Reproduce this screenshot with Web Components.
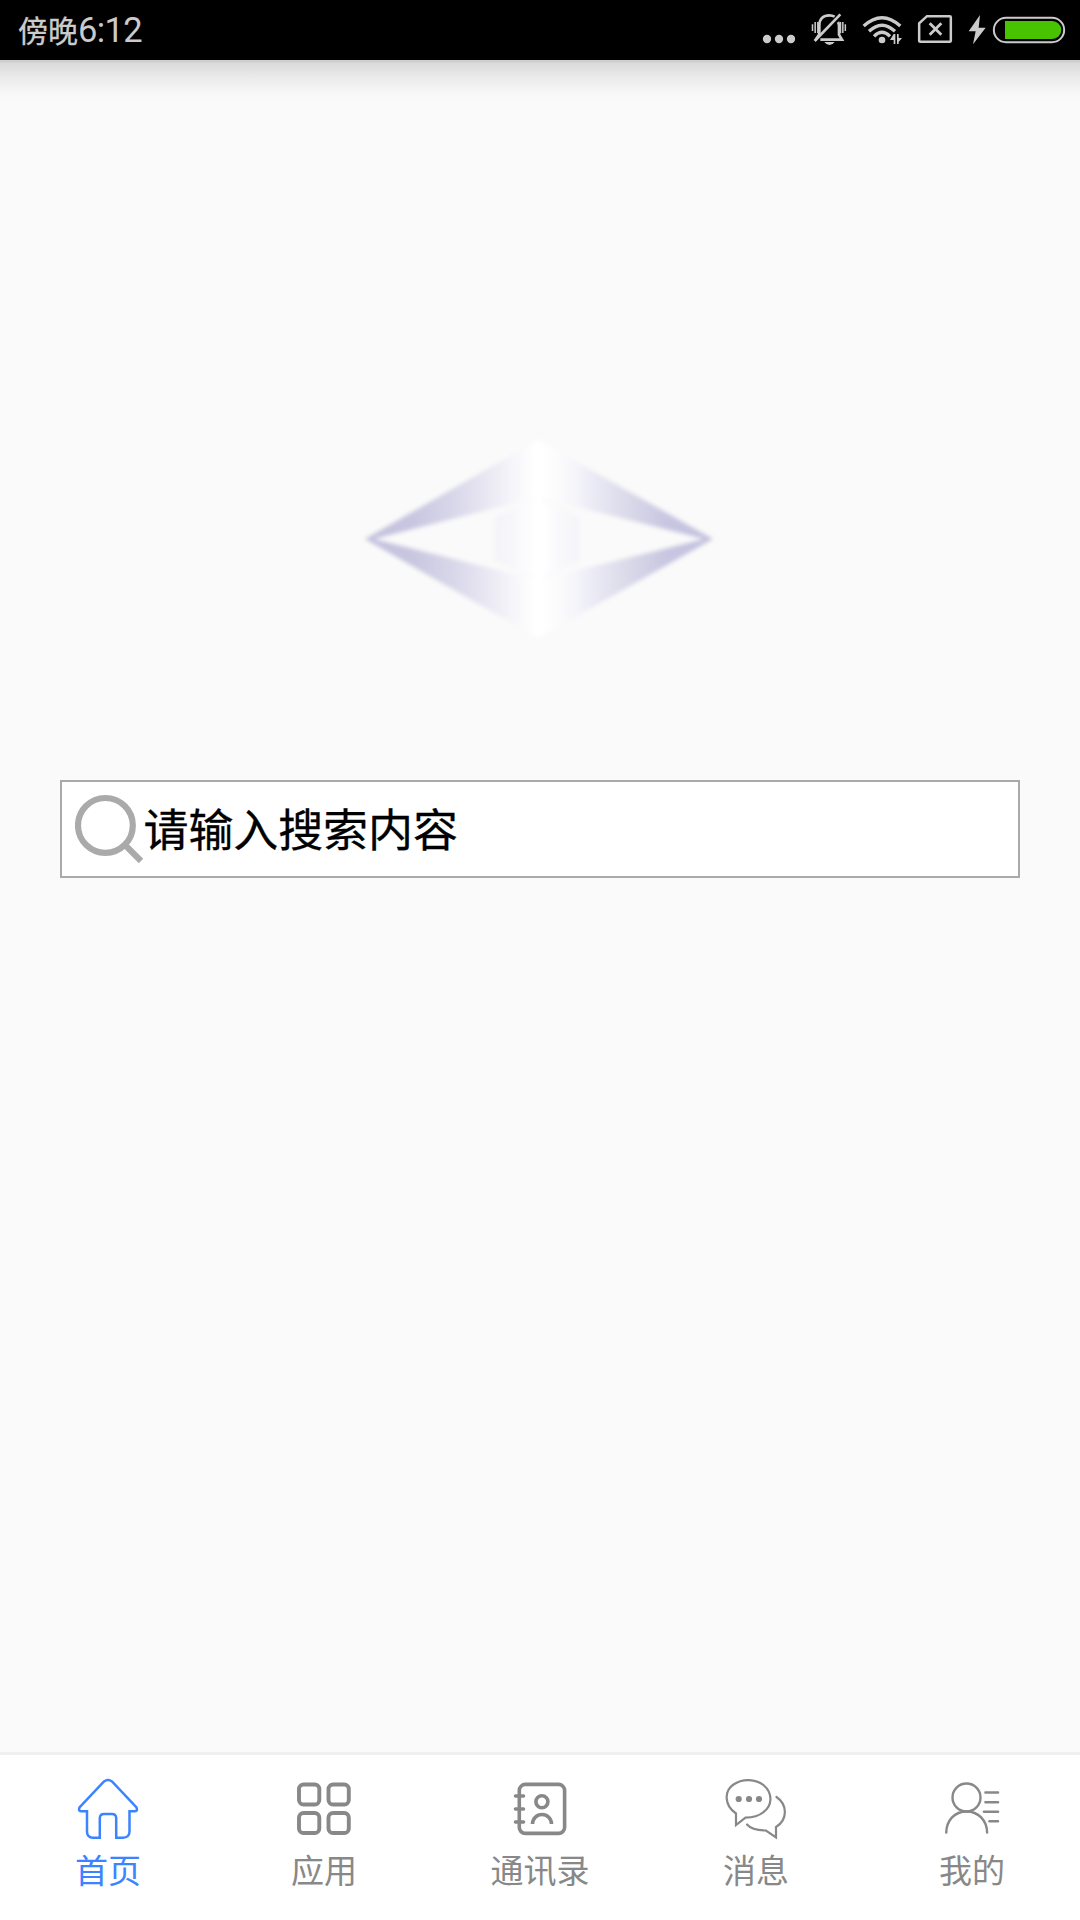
<!DOCTYPE html>
<html lang="zh-CN">
<head>
<meta charset="utf-8">
<title>首页</title>
<style>
html,body{margin:0;height:100%;background:#fafafa}
body{font-family:"Noto Sans CJK SC","Noto Sans",sans-serif}
</style>
</head>
<body>
<home-screen></home-screen>
<script>
// name: [viewBox, width, height, markup]
const ICONS = {
  dots: ['36 0 102 180', 34, 60, '<g fill="currentColor"><circle cx="51" cy="117" r="12.5"/><circle cx="87" cy="117" r="12.5"/><circle cx="123" cy="117" r="12.5"/></g>'],
  mute: ['183 0 108 180', 36, 60, '<g fill="none" stroke="currentColor" stroke-width="8"><path d="M208 106V76C208 56 221 46 238 46Q247 46 254 50M264 66Q267 71 267 78V104L276 119H211M207 104L196 121"/><path d="M194 123L271 43"/><path d="M187.500 73V93M195.500 66V99M203.500 66V100M271.500 66V100M278.500 66V99M286 73V93" stroke-width="4.500"/></g><path d="M223 126H254Q248 135 238.500 135T223 126Z" fill="currentColor"/>'],
  wifi: ['336 0 123 180', 41, 60, '<g fill="none" stroke="currentColor" stroke-width="10"><path d="M341 78Q396 28 451 78M357 94Q396 57 435 94M372 109Q396 85 420 109"/></g><circle cx="396" cy="120" r="10" fill="currentColor"/><path d="M431 102H436V132H431V120H420ZM441 102H446V114H456L446 126V132H441Z" fill="currentColor"/>'],
  sim: ['501 0 108 180', 36, 60, '<g fill="none" stroke="currentColor" stroke-width="7.500"><path d="M531 48.500H599Q602.500 48.500 602.500 52V122Q602.500 125.500 599 125.500H511Q507.500 125.500 507.500 122V70Z"/><path d="M539 70L574 104M574 70L539 104" stroke-width="8.500"/></g>'],
  bolt: ['654 0 54 180', 18, 60, '<path d="M690 45L656 94H677L669 133L707 83H686Z" fill="currentColor"/>'],
  battery: ['726 0 222 180', 74, 60, '<rect x="731.500" y="53.500" width="211" height="73" rx="36.500" fill="none" stroke="currentColor" stroke-width="6"/><path d="M765 63H907A27 27 0 0 1 907 117H765Z" fill="#47c300"/>'],
  search: ['75 794 70 70', 70, 70, '<g fill="none" stroke="#aaa" stroke-width="6.200"><circle cx="105.400" cy="825.400" r="27.400"/><path d="M125 845L141 861"/></g>'],
  home: ['75 1776 66 66', 66, 66, '<path d="M104 1781.500Q108 1778.500 112 1781.500L136.500 1807.500Q138 1811.500 134 1811.300H129.500V1832Q129 1837.500 123 1837.800H116.200V1818Q116 1814 112 1814H104Q100 1814 99.800 1818V1837.800H93Q87.300 1837.500 87 1832V1811.300H82Q78 1811.500 79.500 1807.500Z" fill="none" stroke="currentColor" stroke-width="2.500"/>'],
  apps: ['291 1776 66 66', 66, 66, '<g fill="none" stroke="currentColor" stroke-width="3.900"><rect x="299" y="1784.500" width="20.300" height="20" rx="4.500"/><rect x="328.500" y="1784.500" width="20.300" height="20" rx="4.500"/><rect x="299" y="1813" width="20.300" height="20" rx="4.500"/><rect x="328.500" y="1813" width="20.300" height="20" rx="4.500"/></g>'],
  contacts: ['507 1776 66 66', 66, 66, '<g fill="none" stroke="currentColor" stroke-width="3.600"><rect x="519.300" y="1784.400" width="45.300" height="49" rx="6"/><path d="M515.500 1796H523.500M515.500 1809H523.500M515.500 1822H523.500" stroke-linecap="round"/><circle cx="541.900" cy="1801.800" r="6"/><path d="M532.500 1824A9.500 9.500 0 0 1 551.500 1824"/></g>'],
  chat: ['723 1776 66 66', 66, 66, '<g fill="none" stroke="currentColor" stroke-width="2.200"><path d="M736 1813.500C724 1805.500 724 1791 733.500 1784.500C742 1778.300 756 1778.500 764 1785.500C773 1793.500 772.500 1806 763 1812.500Q757 1817.300 745.500 1817.700L736 1825Z"/><path d="M776.500 1797C788 1805 787.500 1820 776 1827V1837.500L766 1830.500C758 1830.500 751 1829 747 1824.500" stroke-linecap="round"/></g><g fill="currentColor"><circle cx="738.700" cy="1799" r="3.100"/><circle cx="749" cy="1799" r="3.100"/><circle cx="759" cy="1799" r="3.100"/></g>'],
  me: ['939 1776 66 66', 66, 66, '<g fill="none" stroke="currentColor" stroke-width="2.400"><circle cx="966.500" cy="1797.500" r="14"/><path d="M946.200 1833.500C946.200 1820 955 1811.500 966.500 1811.500S987.200 1820 987.200 1833.500"/><path d="M985.500 1792.500H998M985.500 1802.200H998M984 1811.700H998M989.500 1821.300H998" stroke-linecap="round" stroke-width="2.600"/></g>']
};

class UiIcon extends HTMLElement {
  connectedCallback() {
    const [box, w, h, body] = ICONS[this.getAttribute('name')];
    this.attachShadow({mode: 'open'}).innerHTML =
      `<style>:host{display:block;flex:none}svg{display:block}</style><svg viewBox="${box}" width="${w}" height="${h}">${body}</svg>`;
  }
}

class StatusBar extends HTMLElement {
  connectedCallback() {
    this.attachShadow({mode: 'open'}).innerHTML = `
      <style>
        :host{display:flex;align-items:center;justify-content:space-between;height:60px;background:#000;color:#cbcbcb;padding:0 14px 0 18px;box-sizing:border-box}
        .time{display:flex;align-items:center;font-size:30px;line-height:60px;height:60px;font-weight:400;-webkit-text-stroke:.3px currentColor}
        .time span{margin-top:-3px}
        .time .num{font-family:Roboto,"Noto Sans",sans-serif;font-size:34.500px;margin:0;letter-spacing:-.6px;-webkit-text-stroke:0}
        .icons{display:flex}
        .icons ui-icon+ui-icon{margin-left:15px}
        .icons ui-icon[name=sim]{margin-left:14px}
        .icons ui-icon[name=battery]{margin-left:6px}
      </style>
      <div class="time"><span>傍晚</span><span class="num">6:12</span></div>
      <div class="icons">${['dots','mute','wifi','sim','bolt','battery'].map(n => `<ui-icon name="${n}"></ui-icon>`).join('')}</div>`;
  }
}

class BrandMark extends HTMLElement {
  connectedCallback() {
    this.attachShadow({mode: 'open'}).innerHTML = `
      <style>:host{display:block}svg{display:block}</style>
      <svg viewBox="350 420 380 240" width="380" height="240">
        <defs>
          <linearGradient id="band" gradientUnits="userSpaceOnUse" x1="367" x2="711" y1="0" y2="0">
            <stop offset="0" stop-color="#c2c0de"/><stop offset=".13" stop-color="#c8c6e0"/>
            <stop offset=".25" stop-color="#d8d7e9"/><stop offset=".34" stop-color="#e8e6f2"/>
            <stop offset=".41" stop-color="#f4f3f9"/><stop offset=".455" stop-color="#fafafc"/>
            <stop offset=".485" stop-color="#fff"/><stop offset=".51" stop-color="#fff"/>
            <stop offset=".55" stop-color="#fcfcfd"/>
            <stop offset=".6" stop-color="#f6f6fb"/><stop offset=".68" stop-color="#e7e6f2"/>
            <stop offset=".78" stop-color="#d7d6e7"/><stop offset=".87" stop-color="#c8c6e1"/>
            <stop offset="1" stop-color="#c2c0de"/>
          </linearGradient>
          <linearGradient id="core" gradientUnits="userSpaceOnUse" x1="494" x2="580" y1="0" y2="0">
            <stop offset="0" stop-color="#f3f3f8"/><stop offset=".2" stop-color="#f7f7fb"/>
            <stop offset=".42" stop-color="#fdfdfe"/><stop offset=".48" stop-color="#fff"/><stop offset=".58" stop-color="#fff"/>
            <stop offset=".75" stop-color="#f9f9fc"/><stop offset="1" stop-color="#f5f5f9"/>
          </linearGradient>
          <filter id="soft" x="-5%" y="-5%" width="110%" height="110%"><feGaussianBlur stdDeviation="1.900"/></filter>
        </defs>
        <g filter="url(#soft)">
          <path d="M365 539L538 440L713 539L538 638ZM374 539L538 580L704 539L538 497Z" fill="url(#band)" fill-rule="evenodd"/>
          <path d="M495 517L538 499L580 517V561L538 578L495 561Z" fill="url(#core)"/>
          <path d="M533 445H542V633H533Z" fill="#fff"/>
        </g>
      </svg>`;
  }
}

class SearchField extends HTMLElement {
  connectedCallback() {
    this.attachShadow({mode: 'open'}).innerHTML = `
      <style>
        :host{display:flex;align-items:center;box-sizing:border-box;height:98px;border:2px solid #aaa;background:#fff;padding-left:13px;color:#000;font-size:45px;line-height:66px}
        span{margin:-3px 0 0 -1.500px;letter-spacing:-.1px;-webkit-text-stroke:.3px currentColor}
      </style>
      <ui-icon name="search"></ui-icon><span><slot></slot></span>`;
  }
}

class TabItem extends HTMLElement {
  connectedCallback() {
    this.attachShadow({mode: 'open'}).innerHTML = `
      <style>
        :host{display:flex;flex:1;flex-direction:column;align-items:center;padding-top:21px;color:#888;font-size:33px;line-height:48px}
        :host([active]){color:#3c84ff}
        span{margin-top:3px}
      </style>
      <ui-icon name="${this.getAttribute('icon')}"></ui-icon><span><slot></slot></span>`;
  }
}

class TabBar extends HTMLElement {
  connectedCallback() {
    this.attachShadow({mode: 'open'}).innerHTML = `
      <style>:host{display:flex;height:168px;box-sizing:border-box;border-top:3px solid #f0f0f0;background:#fff}</style><slot></slot>`;
  }
}

class HomeScreen extends HTMLElement {
  connectedCallback() {
    this.attachShadow({mode: 'open'}).innerHTML = `
      <style>
        :host{display:flex;flex-direction:column;width:1080px;height:1920px;background:#fafafa;overflow:hidden}
        main{flex:1;display:flex;flex-direction:column;align-items:center;background:linear-gradient(#cecece 0,#cecece 2px,#dadada 3px,#e0e0e0 8px,#e9e9e9 16px,#f2f2f2 26px,#f8f8f8 35px,#fafafa 42px) no-repeat 0 0/100% 42px}
        brand-mark{margin-top:360px}
        search-field{width:960px;margin-top:120px}
      </style>
      <status-bar></status-bar>
      <main><brand-mark></brand-mark><search-field>请输入搜索内容</search-field></main>
      <tab-bar>
        <tab-item icon="home" active>首页</tab-item>
        <tab-item icon="apps">应用</tab-item>
        <tab-item icon="contacts">通讯录</tab-item>
        <tab-item icon="chat">消息</tab-item>
        <tab-item icon="me">我的</tab-item>
      </tab-bar>`;
  }
}

customElements.define('ui-icon', UiIcon);
customElements.define('status-bar', StatusBar);
customElements.define('brand-mark', BrandMark);
customElements.define('search-field', SearchField);
customElements.define('tab-item', TabItem);
customElements.define('tab-bar', TabBar);
customElements.define('home-screen', HomeScreen);
</script>
</body>
</html>
